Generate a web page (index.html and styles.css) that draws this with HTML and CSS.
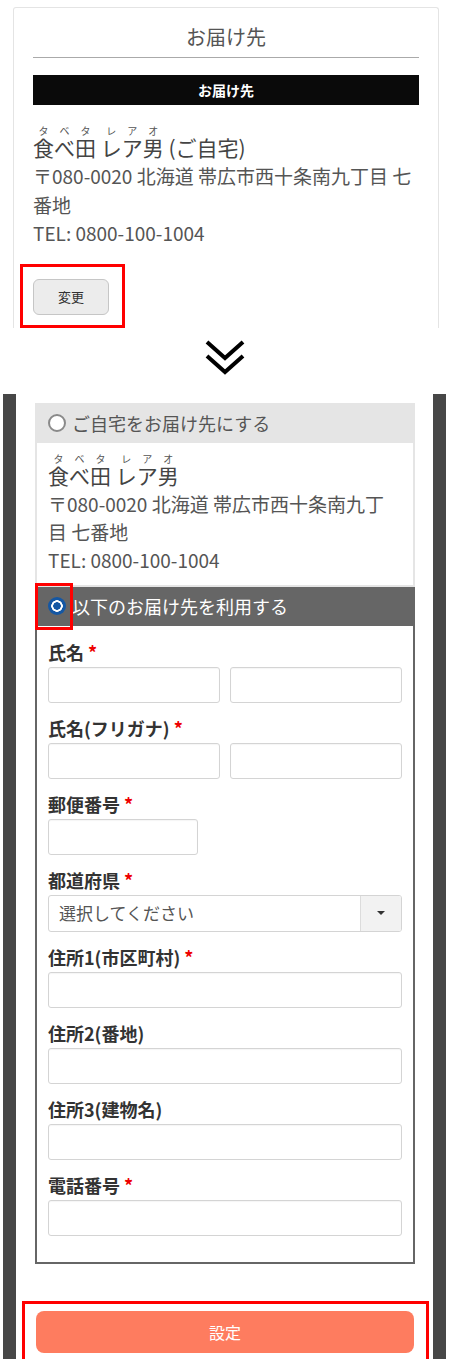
FILE: index.html
```html
<!DOCTYPE html>
<html lang="ja">
<head>
<meta charset="utf-8">
<title>お届け先</title>
<link rel="stylesheet" href="styles.css">
</head>
<body>
<section class="card">
  <h1 class="card-title">お届け先</h1>
  <div class="bar">お届け先</div>
  <div class="addr">
    <div class="name"><ruby>食べ田<rt>タベタ</rt></ruby> <ruby>レア男<rt>レアオ</rt></ruby> (ご自宅)</div>
    <div class="line">〒080-0020 北海道 帯広市西十条南九丁目 七番地</div>
    <div class="line">TEL: 0800-100-1004</div>
  </div>
  <div class="hl hl-change"><button class="btn-change" type="button">変更</button></div>
</section>

<div class="arrow">
  <svg width="40" height="36" viewBox="0 0 40 36" aria-hidden="true">
    <polyline points="2,2 20,18 38,2" fill="none" stroke="#000" stroke-width="4"/>
    <polyline points="2,16 20,32 38,16" fill="none" stroke="#000" stroke-width="4"/>
  </svg>
</div>

<section class="panel">
  <div class="opt">
    <div class="opt-head"><span class="radio"></span>ご自宅をお届け先にする</div>
    <div class="opt-body">
      <div class="name"><ruby>食べ田<rt>タベタ</rt></ruby> <ruby>レア男<rt>レアオ</rt></ruby></div>
      <div class="line">〒080-0020 北海道 帯広市西十条南九丁目 七番地</div>
      <div class="line">TEL: 0800-100-1004</div>
    </div>
  </div>
  <div class="opt opt-sel">
    <div class="opt-head opt-head-dark"><span class="hl-radio"></span><span class="radio radio-on"></span>以下のお届け先を利用する</div>
    <div class="form">
      <div class="field">
        <div class="lbl">氏名 <span class="req">*</span></div>
        <div class="row"><input class="inp" type="text"><input class="inp" type="text"></div>
      </div>
      <div class="field">
        <div class="lbl">氏名(フリガナ) <span class="req">*</span></div>
        <div class="row"><input class="inp" type="text"><input class="inp" type="text"></div>
      </div>
      <div class="field">
        <div class="lbl">郵便番号 <span class="req">*</span></div>
        <input class="inp zip" type="text">
      </div>
      <div class="field">
        <div class="lbl">都道府県 <span class="req">*</span></div>
        <div class="sel"><span class="sel-text">選択してください</span><span class="sel-btn"><span class="caret"></span></span></div>
      </div>
      <div class="field">
        <div class="lbl">住所1(市区町村) <span class="req">*</span></div>
        <input class="inp" type="text">
      </div>
      <div class="field">
        <div class="lbl">住所2(番地)</div>
        <input class="inp" type="text">
      </div>
      <div class="field">
        <div class="lbl">住所3(建物名)</div>
        <input class="inp" type="text">
      </div>
      <div class="field">
        <div class="lbl">電話番号 <span class="req">*</span></div>
        <input class="inp" type="text">
      </div>
    </div>
  </div>
  <div class="hl hl-submit"><button class="btn-submit" type="button">設定</button></div>
</section>
</body>
</html>
```

FILE: styles.css
```css
* { box-sizing: border-box; }

body {
  margin: 0;
  width: 450px;
  background: #fff;
  color: #555;
  font-family: "Noto Sans CJK JP", "Noto Sans", sans-serif;
}

/* ---------- top card ---------- */
.card {
  margin: 7px 11px 0 13px;
  border: 1px solid #e4e4e4;
  border-bottom: 0;
  border-radius: 3px 3px 0 0;
  padding: 0 19px;
}

.card-title {
  margin: 0;
  padding: 14px 0 5px;
  font-size: 20px;
  font-weight: 400;
  line-height: 30px;
  text-align: center;
  color: #555;
  border-bottom: 1px solid #aaa;
}

.bar {
  margin-top: 17px;
  height: 30px;
  line-height: 30px;
  background: #0a0a0a;
  color: #fff;
  font-size: 14px;
  font-weight: 700;
  text-align: center;
}

.addr { padding-top: 21px; }

.name {
  font-size: 21px;
  line-height: 30px;
  color: #444;
}

rt {
  font-size: 10px;
  ruby-align: space-around;
  color: #555;
}

.line {
  font-size: 19px;
  line-height: 28.5px;
  color: #555;
}

.hl { border: 3px solid #f00; }

.hl-change {
  display: inline-block;
  margin: 16px 0 0 -13px;
  padding: 12px 13px 10px 10px;
}

.btn-change {
  display: block;
  width: 76px;
  height: 36px;
  border: 1px solid #c6c6c6;
  border-radius: 6px;
  background: #ececec;
  color: #333;
  font-family: inherit;
  font-size: 13px;
}

/* ---------- arrow ---------- */
.arrow {
  display: flex;
  justify-content: center;
  padding-top: 12px;
  height: 66px;
}

/* ---------- panel ---------- */
.panel {
  margin: 0 4px 0 3px;
  border-left: 13px solid #474747;
  border-right: 13px solid #474747;
  padding: 9px 18px 0 19px;
}

.opt { background: #e5e5e5; }

.opt-head {
  position: relative;
  display: flex;
  align-items: center;
  gap: 6px;
  height: 40px;
  padding-left: 13px;
  font-size: 18px;
  color: #555;
}

.opt-head-dark {
  height: 39px;
  background: #666;
  color: #fff;
}

.radio {
  flex: none;
  width: 18px;
  height: 18px;
  border-radius: 50%;
  border: 2px solid #8a8a8a;
  background: #fff;
}

.radio-on {
  border: 0;
  background: radial-gradient(circle, #1557a3 0 3.5px, #fff 4px 5.5px, #1557a3 6px);
}

.hl-radio {
  position: absolute;
  left: 0;
  top: -4px;
  width: 38px;
  height: 47px;
  border: 3px solid #f00;
}

.opt-body {
  margin: 0 2px;
  border-bottom: 2px solid #e5e5e5;
  background: #fff;
  padding: 11px 16px 11px 11px;
}

.opt-body .line { line-height: 28px; }

.opt-sel { background: none; }

.form {
  border: 2px solid #666;
  border-top: 0;
  background: #fff;
  padding: 14px 11px 26px;
}

.field + .field { margin-top: 13px; }

.lbl {
  margin-bottom: 3px;
  font-size: 18px;
  font-weight: 700;
  line-height: 24px;
  color: #333;
}

.req { color: #e00; }

.row { display: flex; gap: 10px; }

.inp {
  display: block;
  width: 100%;
  height: 36px;
  margin: 0;
  border: 1px solid #d4d4d4;
  border-radius: 3px;
  background: #fff;
  box-shadow: inset 0 1px 1px rgba(0, 0, 0, 0.04);
}

.row .inp { flex: 1; min-width: 0; }

.zip { width: 150px; }

.sel {
  display: flex;
  height: 37px;
  border: 1px solid #d4d4d4;
  border-radius: 3px;
  overflow: hidden;
}

.sel-text {
  flex: 1;
  padding-left: 10px;
  font-size: 17px;
  line-height: 34px;
  color: #555;
}

.sel-btn {
  display: flex;
  align-items: center;
  justify-content: center;
  width: 41px;
  border-left: 1px solid #dcdcdc;
  background: #f2f2f2;
}

.caret {
  width: 0;
  height: 0;
  border-top: 4px solid #333;
  border-left: 4px solid transparent;
  border-right: 4px solid transparent;
}

.hl-submit {
  margin: 37px -14px -4px -13px;
  padding: 7px 12px 7px 11px;
}

.btn-submit {
  display: block;
  width: 100%;
  height: 42px;
  border: 0;
  border-radius: 8px;
  background: #fe7c5f;
  color: #fff;
  font-family: inherit;
  font-size: 16px;
}
```
